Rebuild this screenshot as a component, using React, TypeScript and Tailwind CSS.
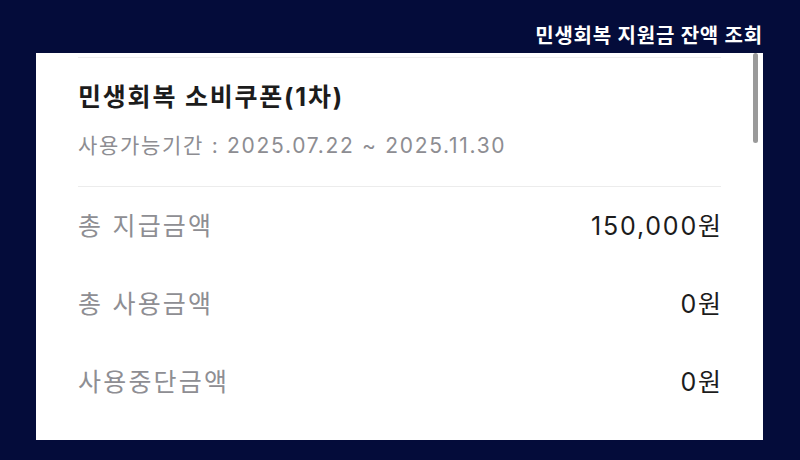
const rows = [
  { label: '총 지급금액', value: '150,000원' },
  { label: '총 사용금액', value: '0원' },
  { label: '사용중단금액', value: '0원' },
];

export default function App() {
  return (
    <div
      className="w-[800px] h-[460px] bg-[#040c3a] flex flex-col overflow-hidden"
      style={{ fontFamily: 'Inter, "Noto Sans CJK KR", "Noto Sans", sans-serif' }}
    >
      <div className="h-[53px] flex items-end justify-end pr-[37px] pb-[4px]">
        <span className="text-white text-[20px] font-bold leading-[26px] tracking-[0.8px]">
          민생회복 지원금 잔액 조회
        </span>
      </div>
      <div className="relative ml-[36px] w-[727px] h-[387px] bg-white">
        <div className="absolute right-[5px] top-0 w-[5px] h-[90px] rounded-full bg-[#9a9a9a]" />
        <div className="mx-[42px] mt-[4px] border-t border-[#eeeeee]">
          <div className="pt-[23px] pb-[27px] border-b border-[#ececec]">
            <div className="text-[25px] font-bold text-[#1c1c1c] leading-[32px] tracking-[1.8px]">
              민생회복 소비쿠폰(1차)
            </div>
            <div className="mt-[20px] text-[21px] text-[#8d8d92] leading-[26px] tracking-[1.7px]">
              사용가능기간 : 2025.07.22 ~ 2025.11.30
            </div>
          </div>
          <div className="flex flex-col">
            {rows.map((row) => (
              <div key={row.label} className="flex items-center justify-between h-[78px]">
                <span className="text-[25px] text-[#8e8e93] leading-[30px] tracking-[2.2px]">
                  {row.label}
                </span>
                <span className="text-[25px] text-[#1c1c1c] leading-[30px] tracking-[1.8px] -mr-[1.8px]">
                  {row.value}
                </span>
              </div>
            ))}
          </div>
        </div>
      </div>
    </div>
  );
}
